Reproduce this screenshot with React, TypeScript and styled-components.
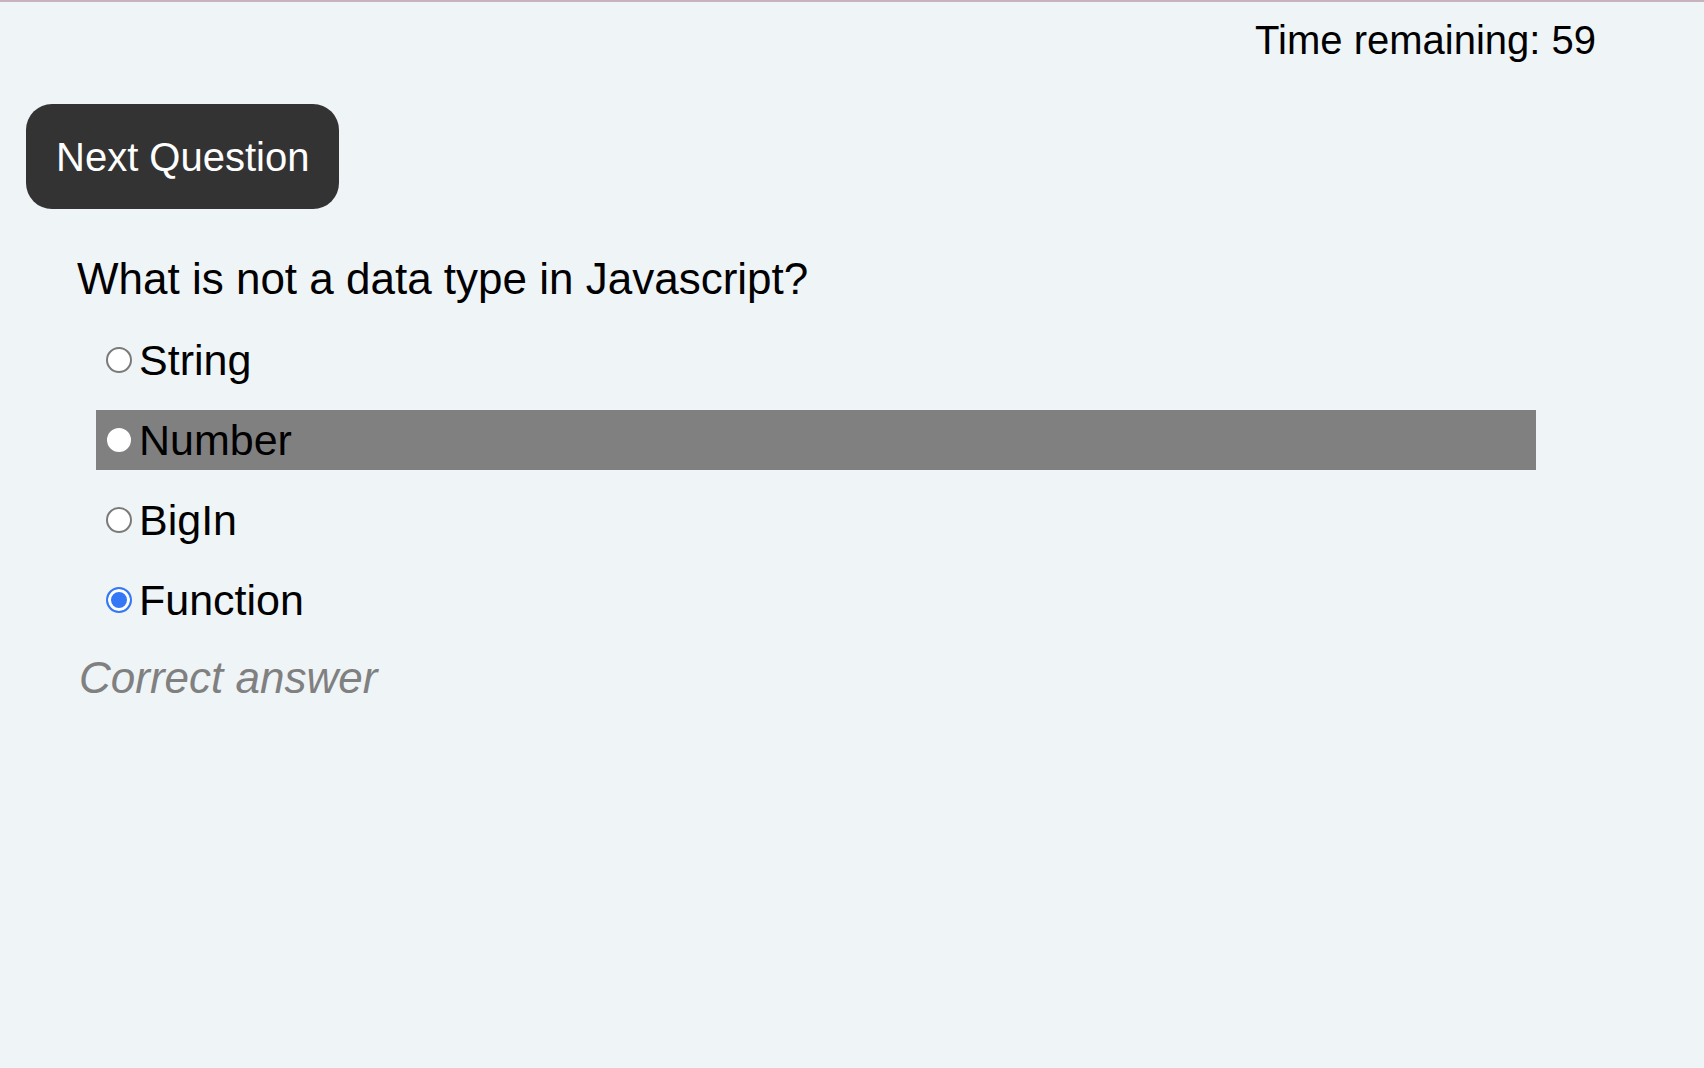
import React from "react";
import styled, { createGlobalStyle, css } from "styled-components";

const GlobalStyle = createGlobalStyle`
  html, body {
    margin: 0;
    padding: 0;
    background: #eff4f7;
  }
  body {
    font-family: "Liberation Sans", Arial, Helvetica, sans-serif;
    color: #000;
  }
`;

const Page = styled.div`
  min-height: 1068px;
  box-sizing: border-box;
  border-top: 2px solid #c7b4be;
  background: #eff4f7;
  padding: 15px 0 0 0;
  display: flex;
  flex-direction: column;
`;

const TimerBar = styled.div`
  display: flex;
  justify-content: flex-end;
  padding-right: 108px;
`;

const Timer = styled.span`
  font-size: 40px;
  line-height: 46px;
  color: #000;
`;

const ButtonRow = styled.div`
  display: flex;
  padding-left: 26px;
  margin-top: 41px;
`;

const NextButton = styled.button`
  font-family: "Liberation Sans", Arial, Helvetica, sans-serif;
  font-size: 40px;
  line-height: 46px;
  height: 105px;
  padding: 0 30px;
  border: none;
  border-radius: 26px;
  background: #333333;
  color: #ffffff;
  cursor: pointer;
`;

const Quiz = styled.section`
  display: flex;
  flex-direction: column;
  padding: 0 168px 0 77px;
  margin-top: 45px;
`;

const Question = styled.h2`
  margin: 0;
  font-weight: normal;
  font-size: 44px;
  line-height: 50px;
`;

const Options = styled.ul`
  list-style: none;
  margin: 26px 0 0 19px;
  padding: 0;
  display: flex;
  flex-direction: column;
  gap: 20px;
`;

const Option = styled.li<{ $highlighted?: boolean }>`
  height: 60px;
  box-sizing: border-box;
  display: flex;
  align-items: center;
  gap: 7px;
  padding-left: 10px;
  font-size: 43px;
  line-height: 50px;
  background: ${(p) => (p.$highlighted ? "#808080" : "transparent")};
`;

const OptionText = styled.span`
  display: block;
`;

type RadioState = "unchecked" | "checked" | "plain";

const Radio = styled.span<{ $state: RadioState }>`
  flex: none;
  width: 26px;
  height: 26px;
  box-sizing: border-box;
  border-radius: 50%;
  background: #ffffff;
  ${(p) =>
    p.$state === "unchecked" &&
    css`
      border: 2px solid #7a7a7a;
    `}
  ${(p) =>
    p.$state === "plain" &&
    css`
      border: 2px solid #ffffff;
      width: 24px;
      height: 24px;
      margin: 0 1px;
    `}
  ${(p) =>
    p.$state === "checked" &&
    css`
      border: 2px solid #3478f6;
      background: #3478f6;
      box-shadow: inset 0 0 0 3px #ffffff;
    `}
`;

const Feedback = styled.p`
  margin: 23px 0 0 2px;
  font-size: 44px;
  line-height: 50px;
  font-style: italic;
  color: #808080;
`;

const options: { label: string; state: RadioState; highlighted?: boolean }[] = [
  { label: "String", state: "unchecked" },
  { label: "Number", state: "plain", highlighted: true },
  { label: "BigIn", state: "unchecked" },
  { label: "Function", state: "checked" },
];

export default function App() {
  return (
    <>
      <GlobalStyle />
      <Page>
        <TimerBar>
          <Timer>Time remaining: 59</Timer>
        </TimerBar>
        <ButtonRow>
          <NextButton>Next Question</NextButton>
        </ButtonRow>
        <Quiz>
          <Question>What is not a data type in Javascript?</Question>
          <Options>
            {options.map((o) => (
              <Option key={o.label} $highlighted={o.highlighted}>
                <Radio $state={o.state} />
                <OptionText>{o.label}</OptionText>
              </Option>
            ))}
          </Options>
          <Feedback>Correct answer</Feedback>
        </Quiz>
      </Page>
    </>
  );
}
